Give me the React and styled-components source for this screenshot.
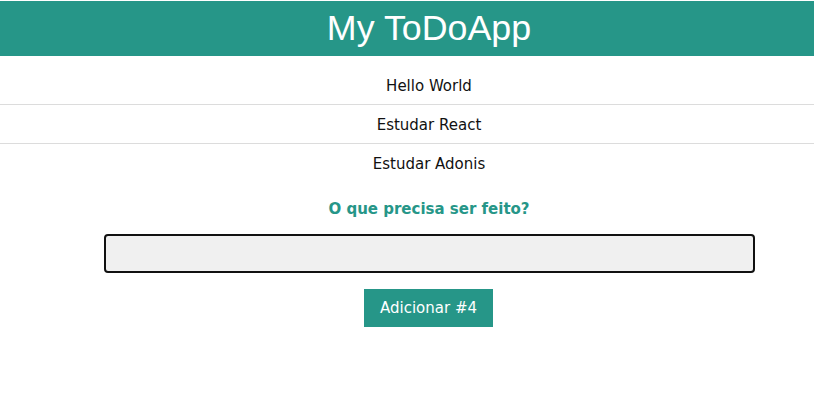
import React, { useState } from "react";
import styled, { createGlobalStyle } from "styled-components";

const Global = createGlobalStyle`
  html, body { margin: 0; padding: 0; background: #fff; }
  body { font-family: "DejaVu Sans", Verdana, sans-serif; font-size: 15px; color: #111; }
`;

const TEAL = "#269688";

const Page = styled.div`
  padding-top: 1px;
  display: flex;
  flex-direction: column;
`;

const Header = styled.header`
  background: ${TEAL};
  height: 55px;
  padding-left: 44px;
  display: flex;
  align-items: center;
  justify-content: center;
`;

const Title = styled.h1`
  margin: 0;
  font-family: "Liberation Sans", Arial, sans-serif;
  font-weight: 400;
  font-size: 35.8px;
  color: #fff;
`;

const List = styled.ul`
  list-style: none;
  margin: 0;
  padding: 0;
`;

const Item = styled.li`
  display: flex;
  align-items: center;
  justify-content: center;
  box-sizing: border-box;
  padding-left: 44px;
  border-bottom: 1px solid ${(p) => (p.$last ? "transparent" : "#dcdcdc")};
  height: ${(p) => (p.$first ? "49px" : "39px")};
  padding-top: ${(p) => (p.$first ? "12px" : "2px")};
`;

const Form = styled.form`
  display: flex;
  flex-direction: column;
  align-items: center;
  padding-top: 17px;
  padding-left: 44px;
`;

const Label = styled.label`
  color: ${TEAL};
  font-weight: 700;
  font-size: 15px;
  margin-bottom: 16px;
`;

const Input = styled.input`
  width: 651px;
  height: 39px;
  box-sizing: border-box;
  border: 2px solid #111;
  border-radius: 4px;
  background: #f0f0f0;
  outline: none;
  font: inherit;
  padding: 0 8px;
`;

const Button = styled.button`
  margin-top: 16px;
  margin-right: 1px;
  width: 129px;
  height: 38px;
  border: none;
  background: ${TEAL};
  color: #fff;
  font-family: "DejaVu Sans", Verdana, sans-serif;
  font-size: 15px;
  cursor: pointer;
`;

export default function App() {
  const [todos] = useState(["Hello World", "Estudar React", "Estudar Adonis"]);
  const [text, setText] = useState("");
  return (
    <Page>
      <Global />
      <Header>
        <Title>My ToDoApp</Title>
      </Header>
      <List>
        {todos.map((t, i) => (
          <Item key={t} $first={i === 0} $last={i === todos.length - 1}>
            {t}
          </Item>
        ))}
      </List>
      <Form onSubmit={(e) => e.preventDefault()}>
        <Label htmlFor="todo">O que precisa ser feito?</Label>
        <Input id="todo" value={text} onChange={(e) => setText(e.target.value)} />
        <Button type="submit">Adicionar #{todos.length + 1}</Button>
      </Form>
    </Page>
  );
}
